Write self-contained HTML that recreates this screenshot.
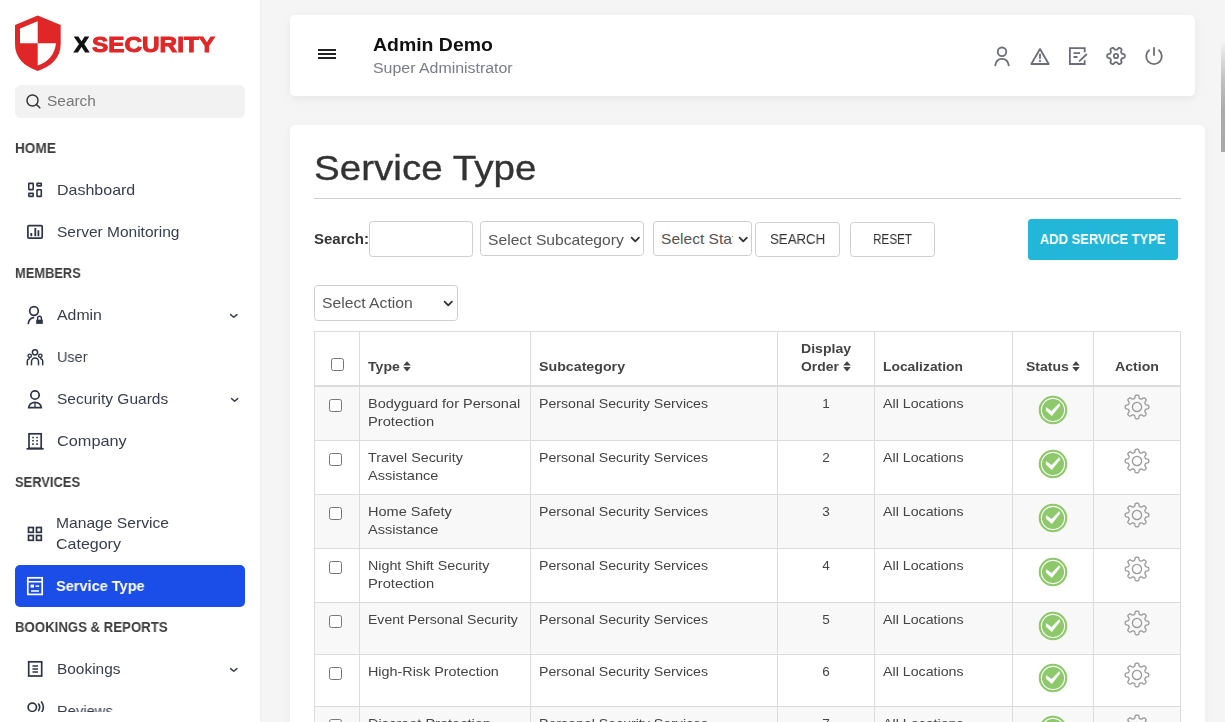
<!DOCTYPE html>
<html><head><meta charset="utf-8"><title>Service Type</title>
<style>
html,body{margin:0;padding:0;width:1225px;height:722px;overflow:hidden;background:#f5f5f5;font-family:'Liberation Sans', sans-serif}
.t{position:absolute;white-space:nowrap;line-height:1;will-change:transform}
svg{overflow:visible}
</style></head><body>
<div style="position:absolute;left:0;top:0;width:260px;height:722px;background:#fff;box-shadow:1px 0 3px rgba(0,0,0,0.04)"></div>
<svg style="position:absolute;left:13px;top:14px" width="50" height="60" viewBox="0 0 50 60">
<path d="M24.7 1.5 L47.7 11 L47.7 30 C47.7 44 38 52.5 24.7 57 C11.4 52.5 2 44 2 30 L2 11 Z" fill="#e02727"/>
<path d="M24.7 7.3 L7 14.5 L7 29.3 L24.7 29.3 Z" fill="#fff"/>
<path d="M24.7 29.3 L43 29.3 C41.5 41 35 48 24.7 51.5 Z" fill="#fff"/>
</svg>
<div style="position:absolute;left:15px;top:85px;width:230px;height:33px;background:#f2f2f2;border-radius:6px"></div>
<svg style="position:absolute;left:25px;top:93px" width="17" height="17" viewBox="0 0 17 17">
<circle cx="7.5" cy="7.5" r="5.5" fill="none" stroke="#333" stroke-width="1.45"/>
<path d="M11.5 11.5 L14.8 14.8" stroke="#333" stroke-width="1.45" stroke-linecap="round"/></svg>
<div style="position:absolute;left:15px;top:565px;width:230px;height:42px;background:#1b4de8;border-radius:5px"></div>
<div style="position:absolute;left:290px;top:15px;width:905px;height:81px;background:#fff;border-radius:5px;box-shadow:0 3px 10px rgba(0,0,0,0.06)"></div>
<div style="position:absolute;left:318px;top:49px;width:18px;height:2px;background:#222"></div>
<div style="position:absolute;left:318px;top:53px;width:18px;height:2px;background:#222"></div>
<div style="position:absolute;left:318px;top:57px;width:18px;height:2px;background:#222"></div>
<div style="position:absolute;left:290px;top:125px;width:915px;height:700px;background:#fff;border-radius:5px;box-shadow:0 3px 10px rgba(0,0,0,0.05)"></div>
<div style="position:absolute;left:314px;top:198px;width:867px;height:1px;background:#cfcfcf"></div>
<div style="position:absolute;left:369px;top:221px;width:104px;height:36px;box-sizing:border-box;background:#fff;border:1px solid #cfcfcf;border-radius:3.5px"></div>
<div style="position:absolute;left:480px;top:221px;width:164px;height:35px;box-sizing:border-box;background:#fff;border:1px solid #cfcfcf;border-radius:3.5px"></div>
<svg style="position:absolute;left:630px;top:235.5px" width="10.5" height="7" viewBox="-1 -1 10.5 7"><path d="M0.6 0.6 L4.25 4.4 L7.9 0.6" fill="none" stroke="#333" stroke-width="1.8" stroke-linecap="round" stroke-linejoin="round"/></svg>
<div style="position:absolute;left:653px;top:221px;width:99px;height:35px;box-sizing:border-box;background:#fff;border:1px solid #cfcfcf;border-radius:3.5px"></div>
<div style="position:absolute;left:654px;top:222px;width:79px;height:33px;overflow:hidden"><span style="position:absolute;left:7.3px;top:8.8025px;white-space:nowrap;font-family:&quot;Liberation Sans&quot;, sans-serif;font-size:15px;color:#555;line-height:1;transform-origin:0 0;transform:scaleX(1.037)">Select Status</span></div>
<svg style="position:absolute;left:737.7px;top:235.5px" width="10.5" height="7" viewBox="-1 -1 10.5 7"><path d="M0.6 0.6 L4.25 4.4 L7.9 0.6" fill="none" stroke="#333" stroke-width="1.8" stroke-linecap="round" stroke-linejoin="round"/></svg>
<div style="position:absolute;left:755px;top:222px;width:85px;height:35px;box-sizing:border-box;background:#fff;border:1px solid #cfcfcf;border-radius:3.5px"></div>
<div style="position:absolute;left:850px;top:222px;width:85px;height:35px;box-sizing:border-box;background:#fff;border:1px solid #cfcfcf;border-radius:3.5px"></div>
<div style="position:absolute;left:1028px;top:219px;width:150px;height:41px;background:#22b7d8;border-radius:3.5px"></div>
<div style="position:absolute;left:314px;top:285px;width:144px;height:36px;box-sizing:border-box;background:#fff;border:1px solid #cfcfcf;border-radius:3.5px"></div>
<svg style="position:absolute;left:443.2px;top:299.5px" width="10.5" height="7" viewBox="-1 -1 10.5 7"><path d="M0.6 0.6 L4.25 4.4 L7.9 0.6" fill="none" stroke="#333" stroke-width="1.8" stroke-linecap="round" stroke-linejoin="round"/></svg>
<div style="position:absolute;left:314px;top:387px;width:866px;height:54px;background:#f8f8f8"></div>
<div style="position:absolute;left:314px;top:495px;width:866px;height:54px;background:#f8f8f8"></div>
<div style="position:absolute;left:314px;top:603px;width:866px;height:52px;background:#f8f8f8"></div>
<div style="position:absolute;left:314px;top:707px;width:866px;height:54px;background:#f8f8f8"></div>
<div style="position:absolute;left:314px;top:331px;width:867px;height:1px;background:#dcdcdc"></div>
<div style="position:absolute;left:314px;top:385px;width:867px;height:2px;background:#dcdcdc"></div>
<div style="position:absolute;left:314px;top:440px;width:867px;height:1px;background:#dcdcdc"></div>
<div style="position:absolute;left:314px;top:494px;width:867px;height:1px;background:#dcdcdc"></div>
<div style="position:absolute;left:314px;top:548px;width:867px;height:1px;background:#dcdcdc"></div>
<div style="position:absolute;left:314px;top:602px;width:867px;height:1px;background:#dcdcdc"></div>
<div style="position:absolute;left:314px;top:654px;width:867px;height:1px;background:#dcdcdc"></div>
<div style="position:absolute;left:314px;top:706px;width:867px;height:1px;background:#dcdcdc"></div>
<div style="position:absolute;left:314px;top:760px;width:867px;height:1px;background:#dcdcdc"></div>
<div style="position:absolute;left:314px;top:331px;width:1px;height:400px;background:#dcdcdc"></div>
<div style="position:absolute;left:359px;top:331px;width:1px;height:400px;background:#dcdcdc"></div>
<div style="position:absolute;left:530px;top:331px;width:1px;height:400px;background:#dcdcdc"></div>
<div style="position:absolute;left:777px;top:331px;width:1px;height:400px;background:#dcdcdc"></div>
<div style="position:absolute;left:874px;top:331px;width:1px;height:400px;background:#dcdcdc"></div>
<div style="position:absolute;left:1012px;top:331px;width:1px;height:400px;background:#dcdcdc"></div>
<div style="position:absolute;left:1093px;top:331px;width:1px;height:400px;background:#dcdcdc"></div>
<div style="position:absolute;left:1180px;top:331px;width:1px;height:400px;background:#dcdcdc"></div>
<div style="position:absolute;left:331px;top:358px;width:13px;height:13px;box-sizing:border-box;border:1px solid #767676;border-radius:2.5px;background:#fff"></div>
<svg style="position:absolute;left:403.4px;top:361.0px" width="8" height="11" viewBox="0 0 8 11"><path d="M0.2 4.6 L4 0.2 L7.8 4.6 Z M0.2 6.1 L4 10.5 L7.8 6.1 Z" fill="#444"/></svg>
<svg style="position:absolute;left:842.6px;top:361.3px" width="8" height="11" viewBox="0 0 8 11"><path d="M0.2 4.6 L4 0.2 L7.8 4.6 Z M0.2 6.1 L4 10.5 L7.8 6.1 Z" fill="#444"/></svg>
<svg style="position:absolute;left:1072.3px;top:361.3px" width="8" height="11" viewBox="0 0 8 11"><path d="M0.2 4.6 L4 0.2 L7.8 4.6 Z M0.2 6.1 L4 10.5 L7.8 6.1 Z" fill="#444"/></svg>
<div style="position:absolute;left:329px;top:399px;width:13px;height:13px;box-sizing:border-box;border:1px solid #767676;border-radius:2.5px;background:#fff"></div>
<svg style="position:absolute;left:1038px;top:395px" width="30" height="30" viewBox="0 0 30 30"><circle cx="15" cy="15" r="14.3" fill="#8dc96b"/><circle cx="15" cy="15" r="11.6" fill="none" stroke="#fff" stroke-width="1.1"/><path d="M8.4 12.6 L13.6 16.2 L21.2 8.4 L22 10.6 L13.8 20.8 L8 15.4 Z" fill="#fff" stroke="#fff" stroke-width="0.4" stroke-linejoin="round"/></svg>
<svg style="position:absolute;left:1124px;top:394px" width="26" height="26" viewBox="-13 -13 26 26"><path d="M0.00 -11.80 L0.31 -11.79 L0.62 -11.77 L0.92 -11.72 L1.22 -11.62 L1.51 -11.43 L1.75 -11.07 L1.94 -10.47 L2.07 -9.74 L2.19 -9.13 L2.35 -8.76 L2.53 -8.55 L2.73 -8.41 L2.94 -8.31 L3.15 -8.22 L3.37 -8.13 L3.58 -8.04 L3.80 -7.96 L4.02 -7.88 L4.25 -7.84 L4.53 -7.85 L4.91 -8.01 L5.42 -8.35 L6.03 -8.77 L6.59 -9.07 L7.02 -9.15 L7.35 -9.08 L7.63 -8.94 L7.88 -8.76 L8.12 -8.56 L8.34 -8.34 L8.56 -8.12 L8.76 -7.88 L8.94 -7.63 L9.08 -7.35 L9.15 -7.02 L9.07 -6.59 L8.77 -6.03 L8.35 -5.42 L8.01 -4.91 L7.85 -4.53 L7.84 -4.25 L7.88 -4.02 L7.96 -3.80 L8.04 -3.58 L8.13 -3.37 L8.22 -3.15 L8.31 -2.94 L8.41 -2.73 L8.55 -2.53 L8.76 -2.35 L9.13 -2.19 L9.74 -2.07 L10.47 -1.94 L11.07 -1.75 L11.43 -1.51 L11.62 -1.22 L11.72 -0.92 L11.77 -0.62 L11.79 -0.31 L11.80 -0.00 L11.79 0.31 L11.77 0.62 L11.72 0.92 L11.62 1.22 L11.43 1.51 L11.07 1.75 L10.47 1.94 L9.74 2.07 L9.13 2.19 L8.76 2.35 L8.55 2.53 L8.41 2.73 L8.31 2.94 L8.22 3.15 L8.13 3.37 L8.04 3.58 L7.96 3.80 L7.88 4.02 L7.84 4.25 L7.85 4.53 L8.01 4.91 L8.35 5.42 L8.77 6.03 L9.07 6.59 L9.15 7.02 L9.08 7.35 L8.94 7.63 L8.76 7.88 L8.56 8.12 L8.34 8.34 L8.12 8.56 L7.88 8.76 L7.63 8.94 L7.35 9.08 L7.02 9.15 L6.59 9.07 L6.03 8.77 L5.42 8.35 L4.91 8.01 L4.53 7.85 L4.25 7.84 L4.02 7.88 L3.80 7.96 L3.58 8.04 L3.37 8.13 L3.15 8.22 L2.94 8.31 L2.73 8.41 L2.53 8.55 L2.35 8.76 L2.19 9.13 L2.07 9.74 L1.94 10.47 L1.75 11.07 L1.51 11.43 L1.22 11.62 L0.92 11.72 L0.62 11.77 L0.31 11.79 L0.00 11.80 L-0.31 11.79 L-0.62 11.77 L-0.92 11.72 L-1.22 11.62 L-1.51 11.43 L-1.75 11.07 L-1.94 10.47 L-2.07 9.74 L-2.19 9.13 L-2.35 8.76 L-2.53 8.55 L-2.73 8.41 L-2.94 8.31 L-3.15 8.22 L-3.37 8.13 L-3.58 8.04 L-3.80 7.96 L-4.02 7.88 L-4.25 7.84 L-4.53 7.85 L-4.91 8.01 L-5.42 8.35 L-6.03 8.77 L-6.59 9.07 L-7.02 9.15 L-7.35 9.08 L-7.63 8.94 L-7.88 8.76 L-8.12 8.56 L-8.34 8.34 L-8.56 8.12 L-8.76 7.88 L-8.94 7.63 L-9.08 7.35 L-9.15 7.02 L-9.07 6.59 L-8.77 6.03 L-8.35 5.42 L-8.01 4.91 L-7.85 4.53 L-7.84 4.25 L-7.88 4.02 L-7.96 3.80 L-8.04 3.58 L-8.13 3.37 L-8.22 3.15 L-8.31 2.94 L-8.41 2.73 L-8.55 2.53 L-8.76 2.35 L-9.13 2.19 L-9.74 2.07 L-10.47 1.94 L-11.07 1.75 L-11.43 1.51 L-11.62 1.22 L-11.72 0.92 L-11.77 0.62 L-11.79 0.31 L-11.80 0.00 L-11.79 -0.31 L-11.77 -0.62 L-11.72 -0.92 L-11.62 -1.22 L-11.43 -1.51 L-11.07 -1.75 L-10.47 -1.94 L-9.74 -2.07 L-9.13 -2.19 L-8.76 -2.35 L-8.55 -2.53 L-8.41 -2.73 L-8.31 -2.94 L-8.22 -3.15 L-8.13 -3.37 L-8.04 -3.58 L-7.96 -3.80 L-7.88 -4.02 L-7.84 -4.25 L-7.85 -4.53 L-8.01 -4.91 L-8.35 -5.42 L-8.77 -6.03 L-9.07 -6.59 L-9.15 -7.02 L-9.08 -7.35 L-8.94 -7.63 L-8.76 -7.88 L-8.56 -8.12 L-8.34 -8.34 L-8.12 -8.56 L-7.88 -8.76 L-7.63 -8.94 L-7.35 -9.08 L-7.02 -9.15 L-6.59 -9.07 L-6.03 -8.77 L-5.42 -8.35 L-4.91 -8.01 L-4.53 -7.85 L-4.25 -7.84 L-4.02 -7.88 L-3.80 -7.96 L-3.58 -8.04 L-3.37 -8.13 L-3.15 -8.22 L-2.94 -8.31 L-2.73 -8.41 L-2.53 -8.55 L-2.35 -8.76 L-2.19 -9.13 L-2.07 -9.74 L-1.94 -10.47 L-1.75 -11.07 L-1.51 -11.43 L-1.22 -11.62 L-0.92 -11.72 L-0.62 -11.77 L-0.31 -11.79 Z" fill="none" stroke="#999" stroke-width="1.3" stroke-linejoin="round"/><circle cx="0" cy="0" r="4.6" fill="none" stroke="#999" stroke-width="1.3"/></svg>
<div style="position:absolute;left:329px;top:453px;width:13px;height:13px;box-sizing:border-box;border:1px solid #767676;border-radius:2.5px;background:#fff"></div>
<svg style="position:absolute;left:1038px;top:449px" width="30" height="30" viewBox="0 0 30 30"><circle cx="15" cy="15" r="14.3" fill="#8dc96b"/><circle cx="15" cy="15" r="11.6" fill="none" stroke="#fff" stroke-width="1.1"/><path d="M8.4 12.6 L13.6 16.2 L21.2 8.4 L22 10.6 L13.8 20.8 L8 15.4 Z" fill="#fff" stroke="#fff" stroke-width="0.4" stroke-linejoin="round"/></svg>
<svg style="position:absolute;left:1124px;top:448px" width="26" height="26" viewBox="-13 -13 26 26"><path d="M0.00 -11.80 L0.31 -11.79 L0.62 -11.77 L0.92 -11.72 L1.22 -11.62 L1.51 -11.43 L1.75 -11.07 L1.94 -10.47 L2.07 -9.74 L2.19 -9.13 L2.35 -8.76 L2.53 -8.55 L2.73 -8.41 L2.94 -8.31 L3.15 -8.22 L3.37 -8.13 L3.58 -8.04 L3.80 -7.96 L4.02 -7.88 L4.25 -7.84 L4.53 -7.85 L4.91 -8.01 L5.42 -8.35 L6.03 -8.77 L6.59 -9.07 L7.02 -9.15 L7.35 -9.08 L7.63 -8.94 L7.88 -8.76 L8.12 -8.56 L8.34 -8.34 L8.56 -8.12 L8.76 -7.88 L8.94 -7.63 L9.08 -7.35 L9.15 -7.02 L9.07 -6.59 L8.77 -6.03 L8.35 -5.42 L8.01 -4.91 L7.85 -4.53 L7.84 -4.25 L7.88 -4.02 L7.96 -3.80 L8.04 -3.58 L8.13 -3.37 L8.22 -3.15 L8.31 -2.94 L8.41 -2.73 L8.55 -2.53 L8.76 -2.35 L9.13 -2.19 L9.74 -2.07 L10.47 -1.94 L11.07 -1.75 L11.43 -1.51 L11.62 -1.22 L11.72 -0.92 L11.77 -0.62 L11.79 -0.31 L11.80 -0.00 L11.79 0.31 L11.77 0.62 L11.72 0.92 L11.62 1.22 L11.43 1.51 L11.07 1.75 L10.47 1.94 L9.74 2.07 L9.13 2.19 L8.76 2.35 L8.55 2.53 L8.41 2.73 L8.31 2.94 L8.22 3.15 L8.13 3.37 L8.04 3.58 L7.96 3.80 L7.88 4.02 L7.84 4.25 L7.85 4.53 L8.01 4.91 L8.35 5.42 L8.77 6.03 L9.07 6.59 L9.15 7.02 L9.08 7.35 L8.94 7.63 L8.76 7.88 L8.56 8.12 L8.34 8.34 L8.12 8.56 L7.88 8.76 L7.63 8.94 L7.35 9.08 L7.02 9.15 L6.59 9.07 L6.03 8.77 L5.42 8.35 L4.91 8.01 L4.53 7.85 L4.25 7.84 L4.02 7.88 L3.80 7.96 L3.58 8.04 L3.37 8.13 L3.15 8.22 L2.94 8.31 L2.73 8.41 L2.53 8.55 L2.35 8.76 L2.19 9.13 L2.07 9.74 L1.94 10.47 L1.75 11.07 L1.51 11.43 L1.22 11.62 L0.92 11.72 L0.62 11.77 L0.31 11.79 L0.00 11.80 L-0.31 11.79 L-0.62 11.77 L-0.92 11.72 L-1.22 11.62 L-1.51 11.43 L-1.75 11.07 L-1.94 10.47 L-2.07 9.74 L-2.19 9.13 L-2.35 8.76 L-2.53 8.55 L-2.73 8.41 L-2.94 8.31 L-3.15 8.22 L-3.37 8.13 L-3.58 8.04 L-3.80 7.96 L-4.02 7.88 L-4.25 7.84 L-4.53 7.85 L-4.91 8.01 L-5.42 8.35 L-6.03 8.77 L-6.59 9.07 L-7.02 9.15 L-7.35 9.08 L-7.63 8.94 L-7.88 8.76 L-8.12 8.56 L-8.34 8.34 L-8.56 8.12 L-8.76 7.88 L-8.94 7.63 L-9.08 7.35 L-9.15 7.02 L-9.07 6.59 L-8.77 6.03 L-8.35 5.42 L-8.01 4.91 L-7.85 4.53 L-7.84 4.25 L-7.88 4.02 L-7.96 3.80 L-8.04 3.58 L-8.13 3.37 L-8.22 3.15 L-8.31 2.94 L-8.41 2.73 L-8.55 2.53 L-8.76 2.35 L-9.13 2.19 L-9.74 2.07 L-10.47 1.94 L-11.07 1.75 L-11.43 1.51 L-11.62 1.22 L-11.72 0.92 L-11.77 0.62 L-11.79 0.31 L-11.80 0.00 L-11.79 -0.31 L-11.77 -0.62 L-11.72 -0.92 L-11.62 -1.22 L-11.43 -1.51 L-11.07 -1.75 L-10.47 -1.94 L-9.74 -2.07 L-9.13 -2.19 L-8.76 -2.35 L-8.55 -2.53 L-8.41 -2.73 L-8.31 -2.94 L-8.22 -3.15 L-8.13 -3.37 L-8.04 -3.58 L-7.96 -3.80 L-7.88 -4.02 L-7.84 -4.25 L-7.85 -4.53 L-8.01 -4.91 L-8.35 -5.42 L-8.77 -6.03 L-9.07 -6.59 L-9.15 -7.02 L-9.08 -7.35 L-8.94 -7.63 L-8.76 -7.88 L-8.56 -8.12 L-8.34 -8.34 L-8.12 -8.56 L-7.88 -8.76 L-7.63 -8.94 L-7.35 -9.08 L-7.02 -9.15 L-6.59 -9.07 L-6.03 -8.77 L-5.42 -8.35 L-4.91 -8.01 L-4.53 -7.85 L-4.25 -7.84 L-4.02 -7.88 L-3.80 -7.96 L-3.58 -8.04 L-3.37 -8.13 L-3.15 -8.22 L-2.94 -8.31 L-2.73 -8.41 L-2.53 -8.55 L-2.35 -8.76 L-2.19 -9.13 L-2.07 -9.74 L-1.94 -10.47 L-1.75 -11.07 L-1.51 -11.43 L-1.22 -11.62 L-0.92 -11.72 L-0.62 -11.77 L-0.31 -11.79 Z" fill="none" stroke="#999" stroke-width="1.3" stroke-linejoin="round"/><circle cx="0" cy="0" r="4.6" fill="none" stroke="#999" stroke-width="1.3"/></svg>
<div style="position:absolute;left:329px;top:507px;width:13px;height:13px;box-sizing:border-box;border:1px solid #767676;border-radius:2.5px;background:#fff"></div>
<svg style="position:absolute;left:1038px;top:503px" width="30" height="30" viewBox="0 0 30 30"><circle cx="15" cy="15" r="14.3" fill="#8dc96b"/><circle cx="15" cy="15" r="11.6" fill="none" stroke="#fff" stroke-width="1.1"/><path d="M8.4 12.6 L13.6 16.2 L21.2 8.4 L22 10.6 L13.8 20.8 L8 15.4 Z" fill="#fff" stroke="#fff" stroke-width="0.4" stroke-linejoin="round"/></svg>
<svg style="position:absolute;left:1124px;top:502px" width="26" height="26" viewBox="-13 -13 26 26"><path d="M0.00 -11.80 L0.31 -11.79 L0.62 -11.77 L0.92 -11.72 L1.22 -11.62 L1.51 -11.43 L1.75 -11.07 L1.94 -10.47 L2.07 -9.74 L2.19 -9.13 L2.35 -8.76 L2.53 -8.55 L2.73 -8.41 L2.94 -8.31 L3.15 -8.22 L3.37 -8.13 L3.58 -8.04 L3.80 -7.96 L4.02 -7.88 L4.25 -7.84 L4.53 -7.85 L4.91 -8.01 L5.42 -8.35 L6.03 -8.77 L6.59 -9.07 L7.02 -9.15 L7.35 -9.08 L7.63 -8.94 L7.88 -8.76 L8.12 -8.56 L8.34 -8.34 L8.56 -8.12 L8.76 -7.88 L8.94 -7.63 L9.08 -7.35 L9.15 -7.02 L9.07 -6.59 L8.77 -6.03 L8.35 -5.42 L8.01 -4.91 L7.85 -4.53 L7.84 -4.25 L7.88 -4.02 L7.96 -3.80 L8.04 -3.58 L8.13 -3.37 L8.22 -3.15 L8.31 -2.94 L8.41 -2.73 L8.55 -2.53 L8.76 -2.35 L9.13 -2.19 L9.74 -2.07 L10.47 -1.94 L11.07 -1.75 L11.43 -1.51 L11.62 -1.22 L11.72 -0.92 L11.77 -0.62 L11.79 -0.31 L11.80 -0.00 L11.79 0.31 L11.77 0.62 L11.72 0.92 L11.62 1.22 L11.43 1.51 L11.07 1.75 L10.47 1.94 L9.74 2.07 L9.13 2.19 L8.76 2.35 L8.55 2.53 L8.41 2.73 L8.31 2.94 L8.22 3.15 L8.13 3.37 L8.04 3.58 L7.96 3.80 L7.88 4.02 L7.84 4.25 L7.85 4.53 L8.01 4.91 L8.35 5.42 L8.77 6.03 L9.07 6.59 L9.15 7.02 L9.08 7.35 L8.94 7.63 L8.76 7.88 L8.56 8.12 L8.34 8.34 L8.12 8.56 L7.88 8.76 L7.63 8.94 L7.35 9.08 L7.02 9.15 L6.59 9.07 L6.03 8.77 L5.42 8.35 L4.91 8.01 L4.53 7.85 L4.25 7.84 L4.02 7.88 L3.80 7.96 L3.58 8.04 L3.37 8.13 L3.15 8.22 L2.94 8.31 L2.73 8.41 L2.53 8.55 L2.35 8.76 L2.19 9.13 L2.07 9.74 L1.94 10.47 L1.75 11.07 L1.51 11.43 L1.22 11.62 L0.92 11.72 L0.62 11.77 L0.31 11.79 L0.00 11.80 L-0.31 11.79 L-0.62 11.77 L-0.92 11.72 L-1.22 11.62 L-1.51 11.43 L-1.75 11.07 L-1.94 10.47 L-2.07 9.74 L-2.19 9.13 L-2.35 8.76 L-2.53 8.55 L-2.73 8.41 L-2.94 8.31 L-3.15 8.22 L-3.37 8.13 L-3.58 8.04 L-3.80 7.96 L-4.02 7.88 L-4.25 7.84 L-4.53 7.85 L-4.91 8.01 L-5.42 8.35 L-6.03 8.77 L-6.59 9.07 L-7.02 9.15 L-7.35 9.08 L-7.63 8.94 L-7.88 8.76 L-8.12 8.56 L-8.34 8.34 L-8.56 8.12 L-8.76 7.88 L-8.94 7.63 L-9.08 7.35 L-9.15 7.02 L-9.07 6.59 L-8.77 6.03 L-8.35 5.42 L-8.01 4.91 L-7.85 4.53 L-7.84 4.25 L-7.88 4.02 L-7.96 3.80 L-8.04 3.58 L-8.13 3.37 L-8.22 3.15 L-8.31 2.94 L-8.41 2.73 L-8.55 2.53 L-8.76 2.35 L-9.13 2.19 L-9.74 2.07 L-10.47 1.94 L-11.07 1.75 L-11.43 1.51 L-11.62 1.22 L-11.72 0.92 L-11.77 0.62 L-11.79 0.31 L-11.80 0.00 L-11.79 -0.31 L-11.77 -0.62 L-11.72 -0.92 L-11.62 -1.22 L-11.43 -1.51 L-11.07 -1.75 L-10.47 -1.94 L-9.74 -2.07 L-9.13 -2.19 L-8.76 -2.35 L-8.55 -2.53 L-8.41 -2.73 L-8.31 -2.94 L-8.22 -3.15 L-8.13 -3.37 L-8.04 -3.58 L-7.96 -3.80 L-7.88 -4.02 L-7.84 -4.25 L-7.85 -4.53 L-8.01 -4.91 L-8.35 -5.42 L-8.77 -6.03 L-9.07 -6.59 L-9.15 -7.02 L-9.08 -7.35 L-8.94 -7.63 L-8.76 -7.88 L-8.56 -8.12 L-8.34 -8.34 L-8.12 -8.56 L-7.88 -8.76 L-7.63 -8.94 L-7.35 -9.08 L-7.02 -9.15 L-6.59 -9.07 L-6.03 -8.77 L-5.42 -8.35 L-4.91 -8.01 L-4.53 -7.85 L-4.25 -7.84 L-4.02 -7.88 L-3.80 -7.96 L-3.58 -8.04 L-3.37 -8.13 L-3.15 -8.22 L-2.94 -8.31 L-2.73 -8.41 L-2.53 -8.55 L-2.35 -8.76 L-2.19 -9.13 L-2.07 -9.74 L-1.94 -10.47 L-1.75 -11.07 L-1.51 -11.43 L-1.22 -11.62 L-0.92 -11.72 L-0.62 -11.77 L-0.31 -11.79 Z" fill="none" stroke="#999" stroke-width="1.3" stroke-linejoin="round"/><circle cx="0" cy="0" r="4.6" fill="none" stroke="#999" stroke-width="1.3"/></svg>
<div style="position:absolute;left:329px;top:561px;width:13px;height:13px;box-sizing:border-box;border:1px solid #767676;border-radius:2.5px;background:#fff"></div>
<svg style="position:absolute;left:1038px;top:557px" width="30" height="30" viewBox="0 0 30 30"><circle cx="15" cy="15" r="14.3" fill="#8dc96b"/><circle cx="15" cy="15" r="11.6" fill="none" stroke="#fff" stroke-width="1.1"/><path d="M8.4 12.6 L13.6 16.2 L21.2 8.4 L22 10.6 L13.8 20.8 L8 15.4 Z" fill="#fff" stroke="#fff" stroke-width="0.4" stroke-linejoin="round"/></svg>
<svg style="position:absolute;left:1124px;top:556px" width="26" height="26" viewBox="-13 -13 26 26"><path d="M0.00 -11.80 L0.31 -11.79 L0.62 -11.77 L0.92 -11.72 L1.22 -11.62 L1.51 -11.43 L1.75 -11.07 L1.94 -10.47 L2.07 -9.74 L2.19 -9.13 L2.35 -8.76 L2.53 -8.55 L2.73 -8.41 L2.94 -8.31 L3.15 -8.22 L3.37 -8.13 L3.58 -8.04 L3.80 -7.96 L4.02 -7.88 L4.25 -7.84 L4.53 -7.85 L4.91 -8.01 L5.42 -8.35 L6.03 -8.77 L6.59 -9.07 L7.02 -9.15 L7.35 -9.08 L7.63 -8.94 L7.88 -8.76 L8.12 -8.56 L8.34 -8.34 L8.56 -8.12 L8.76 -7.88 L8.94 -7.63 L9.08 -7.35 L9.15 -7.02 L9.07 -6.59 L8.77 -6.03 L8.35 -5.42 L8.01 -4.91 L7.85 -4.53 L7.84 -4.25 L7.88 -4.02 L7.96 -3.80 L8.04 -3.58 L8.13 -3.37 L8.22 -3.15 L8.31 -2.94 L8.41 -2.73 L8.55 -2.53 L8.76 -2.35 L9.13 -2.19 L9.74 -2.07 L10.47 -1.94 L11.07 -1.75 L11.43 -1.51 L11.62 -1.22 L11.72 -0.92 L11.77 -0.62 L11.79 -0.31 L11.80 -0.00 L11.79 0.31 L11.77 0.62 L11.72 0.92 L11.62 1.22 L11.43 1.51 L11.07 1.75 L10.47 1.94 L9.74 2.07 L9.13 2.19 L8.76 2.35 L8.55 2.53 L8.41 2.73 L8.31 2.94 L8.22 3.15 L8.13 3.37 L8.04 3.58 L7.96 3.80 L7.88 4.02 L7.84 4.25 L7.85 4.53 L8.01 4.91 L8.35 5.42 L8.77 6.03 L9.07 6.59 L9.15 7.02 L9.08 7.35 L8.94 7.63 L8.76 7.88 L8.56 8.12 L8.34 8.34 L8.12 8.56 L7.88 8.76 L7.63 8.94 L7.35 9.08 L7.02 9.15 L6.59 9.07 L6.03 8.77 L5.42 8.35 L4.91 8.01 L4.53 7.85 L4.25 7.84 L4.02 7.88 L3.80 7.96 L3.58 8.04 L3.37 8.13 L3.15 8.22 L2.94 8.31 L2.73 8.41 L2.53 8.55 L2.35 8.76 L2.19 9.13 L2.07 9.74 L1.94 10.47 L1.75 11.07 L1.51 11.43 L1.22 11.62 L0.92 11.72 L0.62 11.77 L0.31 11.79 L0.00 11.80 L-0.31 11.79 L-0.62 11.77 L-0.92 11.72 L-1.22 11.62 L-1.51 11.43 L-1.75 11.07 L-1.94 10.47 L-2.07 9.74 L-2.19 9.13 L-2.35 8.76 L-2.53 8.55 L-2.73 8.41 L-2.94 8.31 L-3.15 8.22 L-3.37 8.13 L-3.58 8.04 L-3.80 7.96 L-4.02 7.88 L-4.25 7.84 L-4.53 7.85 L-4.91 8.01 L-5.42 8.35 L-6.03 8.77 L-6.59 9.07 L-7.02 9.15 L-7.35 9.08 L-7.63 8.94 L-7.88 8.76 L-8.12 8.56 L-8.34 8.34 L-8.56 8.12 L-8.76 7.88 L-8.94 7.63 L-9.08 7.35 L-9.15 7.02 L-9.07 6.59 L-8.77 6.03 L-8.35 5.42 L-8.01 4.91 L-7.85 4.53 L-7.84 4.25 L-7.88 4.02 L-7.96 3.80 L-8.04 3.58 L-8.13 3.37 L-8.22 3.15 L-8.31 2.94 L-8.41 2.73 L-8.55 2.53 L-8.76 2.35 L-9.13 2.19 L-9.74 2.07 L-10.47 1.94 L-11.07 1.75 L-11.43 1.51 L-11.62 1.22 L-11.72 0.92 L-11.77 0.62 L-11.79 0.31 L-11.80 0.00 L-11.79 -0.31 L-11.77 -0.62 L-11.72 -0.92 L-11.62 -1.22 L-11.43 -1.51 L-11.07 -1.75 L-10.47 -1.94 L-9.74 -2.07 L-9.13 -2.19 L-8.76 -2.35 L-8.55 -2.53 L-8.41 -2.73 L-8.31 -2.94 L-8.22 -3.15 L-8.13 -3.37 L-8.04 -3.58 L-7.96 -3.80 L-7.88 -4.02 L-7.84 -4.25 L-7.85 -4.53 L-8.01 -4.91 L-8.35 -5.42 L-8.77 -6.03 L-9.07 -6.59 L-9.15 -7.02 L-9.08 -7.35 L-8.94 -7.63 L-8.76 -7.88 L-8.56 -8.12 L-8.34 -8.34 L-8.12 -8.56 L-7.88 -8.76 L-7.63 -8.94 L-7.35 -9.08 L-7.02 -9.15 L-6.59 -9.07 L-6.03 -8.77 L-5.42 -8.35 L-4.91 -8.01 L-4.53 -7.85 L-4.25 -7.84 L-4.02 -7.88 L-3.80 -7.96 L-3.58 -8.04 L-3.37 -8.13 L-3.15 -8.22 L-2.94 -8.31 L-2.73 -8.41 L-2.53 -8.55 L-2.35 -8.76 L-2.19 -9.13 L-2.07 -9.74 L-1.94 -10.47 L-1.75 -11.07 L-1.51 -11.43 L-1.22 -11.62 L-0.92 -11.72 L-0.62 -11.77 L-0.31 -11.79 Z" fill="none" stroke="#999" stroke-width="1.3" stroke-linejoin="round"/><circle cx="0" cy="0" r="4.6" fill="none" stroke="#999" stroke-width="1.3"/></svg>
<div style="position:absolute;left:329px;top:615px;width:13px;height:13px;box-sizing:border-box;border:1px solid #767676;border-radius:2.5px;background:#fff"></div>
<svg style="position:absolute;left:1038px;top:611px" width="30" height="30" viewBox="0 0 30 30"><circle cx="15" cy="15" r="14.3" fill="#8dc96b"/><circle cx="15" cy="15" r="11.6" fill="none" stroke="#fff" stroke-width="1.1"/><path d="M8.4 12.6 L13.6 16.2 L21.2 8.4 L22 10.6 L13.8 20.8 L8 15.4 Z" fill="#fff" stroke="#fff" stroke-width="0.4" stroke-linejoin="round"/></svg>
<svg style="position:absolute;left:1124px;top:610px" width="26" height="26" viewBox="-13 -13 26 26"><path d="M0.00 -11.80 L0.31 -11.79 L0.62 -11.77 L0.92 -11.72 L1.22 -11.62 L1.51 -11.43 L1.75 -11.07 L1.94 -10.47 L2.07 -9.74 L2.19 -9.13 L2.35 -8.76 L2.53 -8.55 L2.73 -8.41 L2.94 -8.31 L3.15 -8.22 L3.37 -8.13 L3.58 -8.04 L3.80 -7.96 L4.02 -7.88 L4.25 -7.84 L4.53 -7.85 L4.91 -8.01 L5.42 -8.35 L6.03 -8.77 L6.59 -9.07 L7.02 -9.15 L7.35 -9.08 L7.63 -8.94 L7.88 -8.76 L8.12 -8.56 L8.34 -8.34 L8.56 -8.12 L8.76 -7.88 L8.94 -7.63 L9.08 -7.35 L9.15 -7.02 L9.07 -6.59 L8.77 -6.03 L8.35 -5.42 L8.01 -4.91 L7.85 -4.53 L7.84 -4.25 L7.88 -4.02 L7.96 -3.80 L8.04 -3.58 L8.13 -3.37 L8.22 -3.15 L8.31 -2.94 L8.41 -2.73 L8.55 -2.53 L8.76 -2.35 L9.13 -2.19 L9.74 -2.07 L10.47 -1.94 L11.07 -1.75 L11.43 -1.51 L11.62 -1.22 L11.72 -0.92 L11.77 -0.62 L11.79 -0.31 L11.80 -0.00 L11.79 0.31 L11.77 0.62 L11.72 0.92 L11.62 1.22 L11.43 1.51 L11.07 1.75 L10.47 1.94 L9.74 2.07 L9.13 2.19 L8.76 2.35 L8.55 2.53 L8.41 2.73 L8.31 2.94 L8.22 3.15 L8.13 3.37 L8.04 3.58 L7.96 3.80 L7.88 4.02 L7.84 4.25 L7.85 4.53 L8.01 4.91 L8.35 5.42 L8.77 6.03 L9.07 6.59 L9.15 7.02 L9.08 7.35 L8.94 7.63 L8.76 7.88 L8.56 8.12 L8.34 8.34 L8.12 8.56 L7.88 8.76 L7.63 8.94 L7.35 9.08 L7.02 9.15 L6.59 9.07 L6.03 8.77 L5.42 8.35 L4.91 8.01 L4.53 7.85 L4.25 7.84 L4.02 7.88 L3.80 7.96 L3.58 8.04 L3.37 8.13 L3.15 8.22 L2.94 8.31 L2.73 8.41 L2.53 8.55 L2.35 8.76 L2.19 9.13 L2.07 9.74 L1.94 10.47 L1.75 11.07 L1.51 11.43 L1.22 11.62 L0.92 11.72 L0.62 11.77 L0.31 11.79 L0.00 11.80 L-0.31 11.79 L-0.62 11.77 L-0.92 11.72 L-1.22 11.62 L-1.51 11.43 L-1.75 11.07 L-1.94 10.47 L-2.07 9.74 L-2.19 9.13 L-2.35 8.76 L-2.53 8.55 L-2.73 8.41 L-2.94 8.31 L-3.15 8.22 L-3.37 8.13 L-3.58 8.04 L-3.80 7.96 L-4.02 7.88 L-4.25 7.84 L-4.53 7.85 L-4.91 8.01 L-5.42 8.35 L-6.03 8.77 L-6.59 9.07 L-7.02 9.15 L-7.35 9.08 L-7.63 8.94 L-7.88 8.76 L-8.12 8.56 L-8.34 8.34 L-8.56 8.12 L-8.76 7.88 L-8.94 7.63 L-9.08 7.35 L-9.15 7.02 L-9.07 6.59 L-8.77 6.03 L-8.35 5.42 L-8.01 4.91 L-7.85 4.53 L-7.84 4.25 L-7.88 4.02 L-7.96 3.80 L-8.04 3.58 L-8.13 3.37 L-8.22 3.15 L-8.31 2.94 L-8.41 2.73 L-8.55 2.53 L-8.76 2.35 L-9.13 2.19 L-9.74 2.07 L-10.47 1.94 L-11.07 1.75 L-11.43 1.51 L-11.62 1.22 L-11.72 0.92 L-11.77 0.62 L-11.79 0.31 L-11.80 0.00 L-11.79 -0.31 L-11.77 -0.62 L-11.72 -0.92 L-11.62 -1.22 L-11.43 -1.51 L-11.07 -1.75 L-10.47 -1.94 L-9.74 -2.07 L-9.13 -2.19 L-8.76 -2.35 L-8.55 -2.53 L-8.41 -2.73 L-8.31 -2.94 L-8.22 -3.15 L-8.13 -3.37 L-8.04 -3.58 L-7.96 -3.80 L-7.88 -4.02 L-7.84 -4.25 L-7.85 -4.53 L-8.01 -4.91 L-8.35 -5.42 L-8.77 -6.03 L-9.07 -6.59 L-9.15 -7.02 L-9.08 -7.35 L-8.94 -7.63 L-8.76 -7.88 L-8.56 -8.12 L-8.34 -8.34 L-8.12 -8.56 L-7.88 -8.76 L-7.63 -8.94 L-7.35 -9.08 L-7.02 -9.15 L-6.59 -9.07 L-6.03 -8.77 L-5.42 -8.35 L-4.91 -8.01 L-4.53 -7.85 L-4.25 -7.84 L-4.02 -7.88 L-3.80 -7.96 L-3.58 -8.04 L-3.37 -8.13 L-3.15 -8.22 L-2.94 -8.31 L-2.73 -8.41 L-2.53 -8.55 L-2.35 -8.76 L-2.19 -9.13 L-2.07 -9.74 L-1.94 -10.47 L-1.75 -11.07 L-1.51 -11.43 L-1.22 -11.62 L-0.92 -11.72 L-0.62 -11.77 L-0.31 -11.79 Z" fill="none" stroke="#999" stroke-width="1.3" stroke-linejoin="round"/><circle cx="0" cy="0" r="4.6" fill="none" stroke="#999" stroke-width="1.3"/></svg>
<div style="position:absolute;left:329px;top:667px;width:13px;height:13px;box-sizing:border-box;border:1px solid #767676;border-radius:2.5px;background:#fff"></div>
<svg style="position:absolute;left:1038px;top:663px" width="30" height="30" viewBox="0 0 30 30"><circle cx="15" cy="15" r="14.3" fill="#8dc96b"/><circle cx="15" cy="15" r="11.6" fill="none" stroke="#fff" stroke-width="1.1"/><path d="M8.4 12.6 L13.6 16.2 L21.2 8.4 L22 10.6 L13.8 20.8 L8 15.4 Z" fill="#fff" stroke="#fff" stroke-width="0.4" stroke-linejoin="round"/></svg>
<svg style="position:absolute;left:1124px;top:662px" width="26" height="26" viewBox="-13 -13 26 26"><path d="M0.00 -11.80 L0.31 -11.79 L0.62 -11.77 L0.92 -11.72 L1.22 -11.62 L1.51 -11.43 L1.75 -11.07 L1.94 -10.47 L2.07 -9.74 L2.19 -9.13 L2.35 -8.76 L2.53 -8.55 L2.73 -8.41 L2.94 -8.31 L3.15 -8.22 L3.37 -8.13 L3.58 -8.04 L3.80 -7.96 L4.02 -7.88 L4.25 -7.84 L4.53 -7.85 L4.91 -8.01 L5.42 -8.35 L6.03 -8.77 L6.59 -9.07 L7.02 -9.15 L7.35 -9.08 L7.63 -8.94 L7.88 -8.76 L8.12 -8.56 L8.34 -8.34 L8.56 -8.12 L8.76 -7.88 L8.94 -7.63 L9.08 -7.35 L9.15 -7.02 L9.07 -6.59 L8.77 -6.03 L8.35 -5.42 L8.01 -4.91 L7.85 -4.53 L7.84 -4.25 L7.88 -4.02 L7.96 -3.80 L8.04 -3.58 L8.13 -3.37 L8.22 -3.15 L8.31 -2.94 L8.41 -2.73 L8.55 -2.53 L8.76 -2.35 L9.13 -2.19 L9.74 -2.07 L10.47 -1.94 L11.07 -1.75 L11.43 -1.51 L11.62 -1.22 L11.72 -0.92 L11.77 -0.62 L11.79 -0.31 L11.80 -0.00 L11.79 0.31 L11.77 0.62 L11.72 0.92 L11.62 1.22 L11.43 1.51 L11.07 1.75 L10.47 1.94 L9.74 2.07 L9.13 2.19 L8.76 2.35 L8.55 2.53 L8.41 2.73 L8.31 2.94 L8.22 3.15 L8.13 3.37 L8.04 3.58 L7.96 3.80 L7.88 4.02 L7.84 4.25 L7.85 4.53 L8.01 4.91 L8.35 5.42 L8.77 6.03 L9.07 6.59 L9.15 7.02 L9.08 7.35 L8.94 7.63 L8.76 7.88 L8.56 8.12 L8.34 8.34 L8.12 8.56 L7.88 8.76 L7.63 8.94 L7.35 9.08 L7.02 9.15 L6.59 9.07 L6.03 8.77 L5.42 8.35 L4.91 8.01 L4.53 7.85 L4.25 7.84 L4.02 7.88 L3.80 7.96 L3.58 8.04 L3.37 8.13 L3.15 8.22 L2.94 8.31 L2.73 8.41 L2.53 8.55 L2.35 8.76 L2.19 9.13 L2.07 9.74 L1.94 10.47 L1.75 11.07 L1.51 11.43 L1.22 11.62 L0.92 11.72 L0.62 11.77 L0.31 11.79 L0.00 11.80 L-0.31 11.79 L-0.62 11.77 L-0.92 11.72 L-1.22 11.62 L-1.51 11.43 L-1.75 11.07 L-1.94 10.47 L-2.07 9.74 L-2.19 9.13 L-2.35 8.76 L-2.53 8.55 L-2.73 8.41 L-2.94 8.31 L-3.15 8.22 L-3.37 8.13 L-3.58 8.04 L-3.80 7.96 L-4.02 7.88 L-4.25 7.84 L-4.53 7.85 L-4.91 8.01 L-5.42 8.35 L-6.03 8.77 L-6.59 9.07 L-7.02 9.15 L-7.35 9.08 L-7.63 8.94 L-7.88 8.76 L-8.12 8.56 L-8.34 8.34 L-8.56 8.12 L-8.76 7.88 L-8.94 7.63 L-9.08 7.35 L-9.15 7.02 L-9.07 6.59 L-8.77 6.03 L-8.35 5.42 L-8.01 4.91 L-7.85 4.53 L-7.84 4.25 L-7.88 4.02 L-7.96 3.80 L-8.04 3.58 L-8.13 3.37 L-8.22 3.15 L-8.31 2.94 L-8.41 2.73 L-8.55 2.53 L-8.76 2.35 L-9.13 2.19 L-9.74 2.07 L-10.47 1.94 L-11.07 1.75 L-11.43 1.51 L-11.62 1.22 L-11.72 0.92 L-11.77 0.62 L-11.79 0.31 L-11.80 0.00 L-11.79 -0.31 L-11.77 -0.62 L-11.72 -0.92 L-11.62 -1.22 L-11.43 -1.51 L-11.07 -1.75 L-10.47 -1.94 L-9.74 -2.07 L-9.13 -2.19 L-8.76 -2.35 L-8.55 -2.53 L-8.41 -2.73 L-8.31 -2.94 L-8.22 -3.15 L-8.13 -3.37 L-8.04 -3.58 L-7.96 -3.80 L-7.88 -4.02 L-7.84 -4.25 L-7.85 -4.53 L-8.01 -4.91 L-8.35 -5.42 L-8.77 -6.03 L-9.07 -6.59 L-9.15 -7.02 L-9.08 -7.35 L-8.94 -7.63 L-8.76 -7.88 L-8.56 -8.12 L-8.34 -8.34 L-8.12 -8.56 L-7.88 -8.76 L-7.63 -8.94 L-7.35 -9.08 L-7.02 -9.15 L-6.59 -9.07 L-6.03 -8.77 L-5.42 -8.35 L-4.91 -8.01 L-4.53 -7.85 L-4.25 -7.84 L-4.02 -7.88 L-3.80 -7.96 L-3.58 -8.04 L-3.37 -8.13 L-3.15 -8.22 L-2.94 -8.31 L-2.73 -8.41 L-2.53 -8.55 L-2.35 -8.76 L-2.19 -9.13 L-2.07 -9.74 L-1.94 -10.47 L-1.75 -11.07 L-1.51 -11.43 L-1.22 -11.62 L-0.92 -11.72 L-0.62 -11.77 L-0.31 -11.79 Z" fill="none" stroke="#999" stroke-width="1.3" stroke-linejoin="round"/><circle cx="0" cy="0" r="4.6" fill="none" stroke="#999" stroke-width="1.3"/></svg>
<div style="position:absolute;left:329px;top:719px;width:13px;height:13px;box-sizing:border-box;border:1px solid #767676;border-radius:2.5px;background:#fff"></div>
<svg style="position:absolute;left:1038px;top:715px" width="30" height="30" viewBox="0 0 30 30"><circle cx="15" cy="15" r="14.3" fill="#8dc96b"/><circle cx="15" cy="15" r="11.6" fill="none" stroke="#fff" stroke-width="1.1"/><path d="M8.4 12.6 L13.6 16.2 L21.2 8.4 L22 10.6 L13.8 20.8 L8 15.4 Z" fill="#fff" stroke="#fff" stroke-width="0.4" stroke-linejoin="round"/></svg>
<svg style="position:absolute;left:1124px;top:714px" width="26" height="26" viewBox="-13 -13 26 26"><path d="M0.00 -11.80 L0.31 -11.79 L0.62 -11.77 L0.92 -11.72 L1.22 -11.62 L1.51 -11.43 L1.75 -11.07 L1.94 -10.47 L2.07 -9.74 L2.19 -9.13 L2.35 -8.76 L2.53 -8.55 L2.73 -8.41 L2.94 -8.31 L3.15 -8.22 L3.37 -8.13 L3.58 -8.04 L3.80 -7.96 L4.02 -7.88 L4.25 -7.84 L4.53 -7.85 L4.91 -8.01 L5.42 -8.35 L6.03 -8.77 L6.59 -9.07 L7.02 -9.15 L7.35 -9.08 L7.63 -8.94 L7.88 -8.76 L8.12 -8.56 L8.34 -8.34 L8.56 -8.12 L8.76 -7.88 L8.94 -7.63 L9.08 -7.35 L9.15 -7.02 L9.07 -6.59 L8.77 -6.03 L8.35 -5.42 L8.01 -4.91 L7.85 -4.53 L7.84 -4.25 L7.88 -4.02 L7.96 -3.80 L8.04 -3.58 L8.13 -3.37 L8.22 -3.15 L8.31 -2.94 L8.41 -2.73 L8.55 -2.53 L8.76 -2.35 L9.13 -2.19 L9.74 -2.07 L10.47 -1.94 L11.07 -1.75 L11.43 -1.51 L11.62 -1.22 L11.72 -0.92 L11.77 -0.62 L11.79 -0.31 L11.80 -0.00 L11.79 0.31 L11.77 0.62 L11.72 0.92 L11.62 1.22 L11.43 1.51 L11.07 1.75 L10.47 1.94 L9.74 2.07 L9.13 2.19 L8.76 2.35 L8.55 2.53 L8.41 2.73 L8.31 2.94 L8.22 3.15 L8.13 3.37 L8.04 3.58 L7.96 3.80 L7.88 4.02 L7.84 4.25 L7.85 4.53 L8.01 4.91 L8.35 5.42 L8.77 6.03 L9.07 6.59 L9.15 7.02 L9.08 7.35 L8.94 7.63 L8.76 7.88 L8.56 8.12 L8.34 8.34 L8.12 8.56 L7.88 8.76 L7.63 8.94 L7.35 9.08 L7.02 9.15 L6.59 9.07 L6.03 8.77 L5.42 8.35 L4.91 8.01 L4.53 7.85 L4.25 7.84 L4.02 7.88 L3.80 7.96 L3.58 8.04 L3.37 8.13 L3.15 8.22 L2.94 8.31 L2.73 8.41 L2.53 8.55 L2.35 8.76 L2.19 9.13 L2.07 9.74 L1.94 10.47 L1.75 11.07 L1.51 11.43 L1.22 11.62 L0.92 11.72 L0.62 11.77 L0.31 11.79 L0.00 11.80 L-0.31 11.79 L-0.62 11.77 L-0.92 11.72 L-1.22 11.62 L-1.51 11.43 L-1.75 11.07 L-1.94 10.47 L-2.07 9.74 L-2.19 9.13 L-2.35 8.76 L-2.53 8.55 L-2.73 8.41 L-2.94 8.31 L-3.15 8.22 L-3.37 8.13 L-3.58 8.04 L-3.80 7.96 L-4.02 7.88 L-4.25 7.84 L-4.53 7.85 L-4.91 8.01 L-5.42 8.35 L-6.03 8.77 L-6.59 9.07 L-7.02 9.15 L-7.35 9.08 L-7.63 8.94 L-7.88 8.76 L-8.12 8.56 L-8.34 8.34 L-8.56 8.12 L-8.76 7.88 L-8.94 7.63 L-9.08 7.35 L-9.15 7.02 L-9.07 6.59 L-8.77 6.03 L-8.35 5.42 L-8.01 4.91 L-7.85 4.53 L-7.84 4.25 L-7.88 4.02 L-7.96 3.80 L-8.04 3.58 L-8.13 3.37 L-8.22 3.15 L-8.31 2.94 L-8.41 2.73 L-8.55 2.53 L-8.76 2.35 L-9.13 2.19 L-9.74 2.07 L-10.47 1.94 L-11.07 1.75 L-11.43 1.51 L-11.62 1.22 L-11.72 0.92 L-11.77 0.62 L-11.79 0.31 L-11.80 0.00 L-11.79 -0.31 L-11.77 -0.62 L-11.72 -0.92 L-11.62 -1.22 L-11.43 -1.51 L-11.07 -1.75 L-10.47 -1.94 L-9.74 -2.07 L-9.13 -2.19 L-8.76 -2.35 L-8.55 -2.53 L-8.41 -2.73 L-8.31 -2.94 L-8.22 -3.15 L-8.13 -3.37 L-8.04 -3.58 L-7.96 -3.80 L-7.88 -4.02 L-7.84 -4.25 L-7.85 -4.53 L-8.01 -4.91 L-8.35 -5.42 L-8.77 -6.03 L-9.07 -6.59 L-9.15 -7.02 L-9.08 -7.35 L-8.94 -7.63 L-8.76 -7.88 L-8.56 -8.12 L-8.34 -8.34 L-8.12 -8.56 L-7.88 -8.76 L-7.63 -8.94 L-7.35 -9.08 L-7.02 -9.15 L-6.59 -9.07 L-6.03 -8.77 L-5.42 -8.35 L-4.91 -8.01 L-4.53 -7.85 L-4.25 -7.84 L-4.02 -7.88 L-3.80 -7.96 L-3.58 -8.04 L-3.37 -8.13 L-3.15 -8.22 L-2.94 -8.31 L-2.73 -8.41 L-2.53 -8.55 L-2.35 -8.76 L-2.19 -9.13 L-2.07 -9.74 L-1.94 -10.47 L-1.75 -11.07 L-1.51 -11.43 L-1.22 -11.62 L-0.92 -11.72 L-0.62 -11.77 L-0.31 -11.79 Z" fill="none" stroke="#999" stroke-width="1.3" stroke-linejoin="round"/><circle cx="0" cy="0" r="4.6" fill="none" stroke="#999" stroke-width="1.3"/></svg>
<svg style="position:absolute;left:990px;top:44px" width="180" height="26" viewBox="990 44 180 26" fill="none" stroke="#6b6e78" stroke-width="1.8" stroke-linecap="round" stroke-linejoin="round"><circle cx="1002" cy="51.8" r="4.3"/><path d="M995.3 65.3 C996 60.5 998.5 58.8 1002 58.8 C1005.5 58.8 1008 60.5 1008.7 65.3"/><path d="M1040 49 L1031.3 64 L1048.7 64 Z"/><path d="M1040 54.5 L1040 58"/><circle cx="1040" cy="61" r="0.4" fill="#6b6e78"/><path d="M1084.7 52.2 L1084.7 48.2 L1069.9 48.2 L1069.9 64 L1084.7 64 L1084.7 60.3" stroke-linecap="butt" stroke-linejoin="miter"/><path d="M1073.5 53.2 L1080 53.2 M1073.5 57 L1077.5 57" stroke-linecap="butt"/><path d="M1079.6 60.9 L1086.4 54.5"/><circle cx="1116" cy="56" r="2.2"/><path d="M1154 47.8 L1154 55"/><path d="M1149 50.3 A7.8 7.8 0 1 0 1159 50.3"/><path transform="translate(1116 56)" d="M0.00 -6.35 L0.17 -6.35 L0.33 -6.35 L0.50 -6.35 L0.67 -6.35 L0.84 -6.37 L1.02 -6.42 L1.21 -6.51 L1.42 -6.69 L1.68 -6.98 L1.97 -7.34 L2.28 -7.69 L2.58 -7.95 L2.86 -8.08 L3.12 -8.12 L3.36 -8.10 L3.58 -8.05 L3.80 -7.97 L4.01 -7.88 L4.22 -7.78 L4.42 -7.66 L4.62 -7.54 L4.82 -7.42 L5.00 -7.28 L5.18 -7.13 L5.34 -6.96 L5.48 -6.76 L5.57 -6.52 L5.59 -6.21 L5.52 -5.82 L5.37 -5.37 L5.21 -4.94 L5.08 -4.58 L5.04 -4.30 L5.05 -4.09 L5.10 -3.91 L5.17 -3.76 L5.25 -3.61 L5.33 -3.46 L5.42 -3.32 L5.50 -3.18 L5.58 -3.03 L5.66 -2.89 L5.75 -2.74 L5.84 -2.60 L5.94 -2.46 L6.07 -2.33 L6.24 -2.21 L6.51 -2.11 L6.88 -2.04 L7.34 -1.97 L7.80 -1.87 L8.18 -1.74 L8.43 -1.56 L8.59 -1.36 L8.70 -1.14 L8.76 -0.92 L8.80 -0.69 L8.83 -0.46 L8.85 -0.23 L8.85 -0.00 L8.85 0.23 L8.83 0.46 L8.80 0.69 L8.76 0.92 L8.70 1.14 L8.59 1.36 L8.43 1.56 L8.18 1.74 L7.80 1.87 L7.34 1.97 L6.88 2.04 L6.51 2.11 L6.24 2.21 L6.07 2.33 L5.94 2.46 L5.84 2.60 L5.75 2.74 L5.66 2.89 L5.58 3.03 L5.50 3.17 L5.42 3.32 L5.33 3.46 L5.25 3.61 L5.17 3.76 L5.10 3.91 L5.05 4.09 L5.04 4.30 L5.08 4.58 L5.21 4.94 L5.37 5.37 L5.52 5.82 L5.59 6.21 L5.57 6.52 L5.48 6.76 L5.34 6.96 L5.18 7.13 L5.00 7.28 L4.82 7.42 L4.62 7.54 L4.42 7.66 L4.22 7.78 L4.01 7.88 L3.80 7.97 L3.58 8.05 L3.36 8.10 L3.12 8.12 L2.86 8.08 L2.58 7.95 L2.28 7.69 L1.97 7.34 L1.68 6.98 L1.42 6.69 L1.21 6.51 L1.02 6.42 L0.84 6.37 L0.67 6.35 L0.50 6.35 L0.33 6.35 L0.17 6.35 L0.00 6.35 L-0.17 6.35 L-0.33 6.35 L-0.50 6.35 L-0.67 6.35 L-0.84 6.37 L-1.02 6.42 L-1.21 6.51 L-1.42 6.69 L-1.68 6.98 L-1.97 7.34 L-2.28 7.69 L-2.58 7.95 L-2.86 8.08 L-3.12 8.12 L-3.36 8.10 L-3.58 8.05 L-3.80 7.97 L-4.01 7.88 L-4.22 7.78 L-4.42 7.66 L-4.62 7.54 L-4.82 7.42 L-5.00 7.28 L-5.18 7.13 L-5.34 6.96 L-5.48 6.76 L-5.57 6.52 L-5.59 6.21 L-5.52 5.82 L-5.37 5.37 L-5.21 4.94 L-5.08 4.58 L-5.04 4.30 L-5.05 4.09 L-5.10 3.91 L-5.17 3.76 L-5.25 3.61 L-5.33 3.46 L-5.42 3.32 L-5.50 3.18 L-5.58 3.03 L-5.66 2.89 L-5.75 2.74 L-5.84 2.60 L-5.94 2.46 L-6.07 2.33 L-6.24 2.21 L-6.51 2.11 L-6.88 2.04 L-7.34 1.97 L-7.80 1.87 L-8.18 1.74 L-8.43 1.56 L-8.59 1.36 L-8.70 1.14 L-8.76 0.92 L-8.80 0.69 L-8.83 0.46 L-8.85 0.23 L-8.85 0.00 L-8.85 -0.23 L-8.83 -0.46 L-8.80 -0.69 L-8.76 -0.92 L-8.70 -1.14 L-8.59 -1.36 L-8.43 -1.56 L-8.18 -1.74 L-7.80 -1.87 L-7.34 -1.97 L-6.88 -2.04 L-6.51 -2.11 L-6.24 -2.21 L-6.07 -2.33 L-5.94 -2.46 L-5.84 -2.60 L-5.75 -2.74 L-5.66 -2.89 L-5.58 -3.03 L-5.50 -3.18 L-5.42 -3.32 L-5.33 -3.46 L-5.25 -3.61 L-5.17 -3.76 L-5.10 -3.91 L-5.05 -4.09 L-5.04 -4.30 L-5.08 -4.58 L-5.21 -4.94 L-5.37 -5.37 L-5.52 -5.82 L-5.59 -6.21 L-5.57 -6.52 L-5.48 -6.76 L-5.34 -6.96 L-5.18 -7.13 L-5.00 -7.28 L-4.82 -7.42 L-4.62 -7.54 L-4.42 -7.66 L-4.22 -7.78 L-4.01 -7.88 L-3.80 -7.97 L-3.58 -8.05 L-3.36 -8.10 L-3.12 -8.12 L-2.86 -8.08 L-2.58 -7.95 L-2.28 -7.69 L-1.97 -7.34 L-1.68 -6.98 L-1.42 -6.69 L-1.21 -6.51 L-1.02 -6.42 L-0.84 -6.37 L-0.67 -6.35 L-0.50 -6.35 L-0.33 -6.35 L-0.17 -6.35 Z"/></svg>
<svg style="position:absolute;left:0;top:0" width="60" height="722" viewBox="0 0 60 722" fill="none" stroke="#2d3446" stroke-width="1.7"><g stroke-width="1.6"><rect x="28.8" y="183.4" width="4.4" height="6.2" rx="0.3"/><rect x="37" y="183.4" width="4.3" height="2.5" rx="0.3"/><rect x="28.8" y="193.4" width="4.4" height="3" rx="0.3"/><rect x="37" y="189.8" width="4.3" height="6.6" rx="0.3"/></g><rect x="27.9" y="225.6" width="14.3" height="12.5" rx="1"/><path d="M31.3 236.2 V233 M35.3 236.2 V228 M38.4 236.2 V230.2" stroke-width="1.8"/><circle cx="34" cy="311" r="4.3"/><path d="M28.3 323.3 C28.8 320.2 30.5 318.3 33.5 317.7" stroke-linecap="round"/><rect x="36.2" y="319.7" width="6.6" height="4.2" fill="#2d3446" stroke="none"/><path d="M37.6 320 V318.2 A1.9 1.9 0 0 1 41.4 318.2 V320" stroke-width="1.4"/><circle cx="35" cy="352.3" r="2.6" stroke-width="1.5"/><circle cx="29.7" cy="355.8" r="1.7" stroke-width="1.4"/><circle cx="40.3" cy="355.8" r="1.7" stroke-width="1.4"/><path d="M31.5 364.7 V361.5 A3.5 3.5 0 0 1 38.5 361.5 V364.7" stroke-width="1.5" stroke-linecap="round"/><path d="M27.3 364.7 V361 A2.3 2.3 0 0 1 29.3 358.8 M42.7 364.7 V361 A2.3 2.3 0 0 0 40.7 358.8" stroke-width="1.5" stroke-linecap="round"/><circle cx="35" cy="395" r="4.2"/><path d="M28.7 407.6 A6.3 5.3 0 0 1 41.3 407.6 Z"/><path d="M35 402.5 V407.5" stroke-width="1.3"/><rect x="29" y="433.8" width="12.2" height="14.5"/><path d="M26.5 448.8 H43.7"/><path d="M32.2 437.5 h1.6 M36.3 437.5 h1.6 M32.2 440.8 h1.6 M36.3 440.8 h1.6 M32.2 444.1 h1.6 M36.3 444.1 h1.6" stroke-width="1.6"/><rect x="28.5" y="527.5" width="4.8" height="4.8"/><rect x="36.5" y="527.5" width="4.8" height="4.8"/><rect x="28.5" y="535.5" width="4.8" height="4.8"/><rect x="36.5" y="535.5" width="4.8" height="4.8"/><rect x="28.7" y="661.8" width="13" height="14.2"/><path d="M32.5 666 H38 M32.5 669 H38 M32.5 672 H38" stroke-width="1.5"/><circle cx="32.3" cy="707.3" r="4.2"/><path d="M38.6 704 A6 6 0 0 1 38.6 710.6 M41.5 702 A9 9 0 0 1 41.5 712.6" stroke-width="1.6" stroke-linecap="round"/></svg>
<svg style="position:absolute;left:0;top:560px" width="60" height="50" viewBox="0 560 60 50" fill="none" stroke="#fff" stroke-width="1.7"><rect x="27.8" y="577.8" width="14.4" height="16.6"/><path d="M28 581.8 H42 M31 591 H39" stroke-width="1.5"/><rect x="30.6" y="584.6" width="3.4" height="3" fill="#fff" stroke="none"/><path d="M35.5 586.1 H39.2" stroke-width="1.5"/></svg>
<svg style="position:absolute;left:229.2px;top:312.8px" width="9.5" height="5.9" viewBox="-1 -1 9.5 5.9"><path d="M0.6 0.6 L3.75 3.3 L6.9 0.6" fill="none" stroke="#3a4150" stroke-width="1.5" stroke-linecap="round" stroke-linejoin="round"/></svg>
<svg style="position:absolute;left:229.5px;top:396.8px" width="9.3" height="5.9" viewBox="-1 -1 9.3 5.9"><path d="M0.6 0.6 L3.65 3.3 L6.7 0.6" fill="none" stroke="#3a4150" stroke-width="1.5" stroke-linecap="round" stroke-linejoin="round"/></svg>
<svg style="position:absolute;left:229.2px;top:667px" width="9.5" height="5.9" viewBox="-1 -1 9.5 5.9"><path d="M0.6 0.6 L3.75 3.3 L6.9 0.6" fill="none" stroke="#3a4150" stroke-width="1.5" stroke-linecap="round" stroke-linejoin="round"/></svg>
<div style="position:absolute;left:1221px;top:44px;width:4px;height:108px;background:linear-gradient(180deg,#f0f0f0 0%,#c4c4c4 30%,#ababab 60%,#a9a9a9 100%)"></div>
<div style="position:absolute;z-index:5;left:0;top:712px;width:260px;height:10px;background:#fff"></div>
<span class="t" id="t0" style="left:74.28px;top:33.95px;font-size:22.5px;font-weight:700;color:#111;-webkit-text-stroke:1px #111">X</span>
<span class="t" id="t1" style="left:92.28px;top:33.95px;font-size:22.5px;font-weight:700;color:#e02727;transform-origin:0 0;transform:scaleX(1.0817);-webkit-text-stroke:1px #e02727">SECURITY</span>
<span class="t" id="t2" style="left:46.70px;top:94.35px;font-size:14px;font-weight:400;color:#777;transform-origin:0 0;transform:scaleX(1.1030)">Search</span>
<span class="t" id="t3" style="left:14.80px;top:141.15px;font-size:14px;font-weight:700;color:#3d3d3d;transform-origin:0 0;transform:scaleX(0.9718)">HOME</span>
<span class="t" id="t4" style="left:56.55px;top:182.30px;font-size:15px;font-weight:400;color:#373e4d;transform-origin:0 0;transform:scaleX(1.0663)">Dashboard</span>
<span class="t" id="t5" style="left:56.55px;top:224.30px;font-size:15px;font-weight:400;color:#373e4d;transform-origin:0 0;transform:scaleX(1.0341)">Server Monitoring</span>
<span class="t" id="t6" style="left:14.80px;top:266.25px;font-size:14px;font-weight:700;color:#3d3d3d;transform-origin:0 0;transform:scaleX(0.9191)">MEMBERS</span>
<span class="t" id="t7" style="left:57.25px;top:307.00px;font-size:15px;font-weight:400;color:#373e4d;transform-origin:0 0;transform:scaleX(1.0569)">Admin</span>
<span class="t" id="t8" style="left:56.75px;top:349.30px;font-size:15px;font-weight:400;color:#373e4d;transform-origin:0 0;transform:scaleX(0.9619)">User</span>
<span class="t" id="t9" style="left:56.75px;top:391.30px;font-size:15px;font-weight:400;color:#373e4d;transform-origin:0 0;transform:scaleX(1.0343)">Security Guards</span>
<span class="t" id="t10" style="left:56.75px;top:433.30px;font-size:15px;font-weight:400;color:#373e4d;transform-origin:0 0;transform:scaleX(1.0868)">Company</span>
<span class="t" id="t11" style="left:14.80px;top:474.85px;font-size:14px;font-weight:700;color:#3d3d3d;transform-origin:0 0;transform:scaleX(0.9224)">SERVICES</span>
<span class="t" id="t12" style="left:56.25px;top:514.80px;font-size:15px;font-weight:400;color:#373e4d;transform-origin:0 0;transform:scaleX(1.0418)">Manage Service</span>
<span class="t" id="t13" style="left:56.25px;top:536.30px;font-size:15px;font-weight:400;color:#373e4d;transform-origin:0 0;transform:scaleX(1.0671)">Category</span>
<span class="t" id="t14" style="left:56.25px;top:578.10px;font-size:15px;font-weight:700;color:#fff;transform-origin:0 0;transform:scaleX(0.9696)">Service Type</span>
<span class="t" id="t15" style="left:14.80px;top:619.75px;font-size:14px;font-weight:700;color:#3d3d3d;transform-origin:0 0;transform:scaleX(0.9431)">BOOKINGS &amp; REPORTS</span>
<span class="t" id="t16" style="left:56.75px;top:661.00px;font-size:15px;font-weight:400;color:#373e4d;transform-origin:0 0;transform:scaleX(1.0276)">Bookings</span>
<span class="t" id="t17" style="left:56.75px;top:703.00px;font-size:15px;font-weight:400;color:#373e4d;transform-origin:0 0;transform:scaleX(0.9859)">Reviews</span>
<span class="t" id="t18" style="left:372.60px;top:35.56px;font-size:18px;font-weight:700;color:#111;transform-origin:0 0;transform:scaleX(1.0797)">Admin Demo</span>
<span class="t" id="t19" style="left:372.80px;top:61.05px;font-size:14px;font-weight:400;color:#7a7d88;transform-origin:0 0;transform:scaleX(1.1358)">Super Administrator</span>
<span class="t" id="t20" style="left:313.65px;top:149.87px;font-size:35px;font-weight:400;color:#333;transform-origin:0 0;transform:scaleX(1.1028);-webkit-text-stroke:0.35px #333">Service Type</span>
<span class="t" id="t21" style="left:313.70px;top:231.95px;font-size:14px;font-weight:700;color:#333;transform-origin:0 0;transform:scaleX(1.0709)">Search:</span>
<span class="t" id="t22" style="left:487.75px;top:231.60px;font-size:15px;font-weight:400;color:#555;transform-origin:0 0;transform:scaleX(1.0443)">Select Subcategory</span>
<span class="t" id="t23" style="left:769.60px;top:232.15px;font-size:14px;font-weight:400;color:#333;transform-origin:0 0;transform:scaleX(0.9458)">SEARCH</span>
<span class="t" id="t24" style="left:872.60px;top:231.95px;font-size:14px;font-weight:400;color:#333;transform-origin:0 0;transform:scaleX(0.8376)">RESET</span>
<span class="t" id="t25" style="left:1040.00px;top:231.95px;font-size:14px;font-weight:700;color:#fff;transform-origin:0 0;transform:scaleX(0.9248)">ADD SERVICE TYPE</span>
<span class="t" id="t26" style="left:321.65px;top:295.00px;font-size:15px;font-weight:400;color:#555;transform-origin:0 0;transform:scaleX(1.0464)">Select Action</span>
<span class="t" id="t27" style="left:368.32px;top:360.07px;font-size:13.5px;font-weight:700;color:#444;transform-origin:0 0;transform:scaleX(1.0436)">Type</span>
<span class="t" id="t28" style="left:538.93px;top:360.37px;font-size:13.5px;font-weight:700;color:#444;transform-origin:0 0;transform:scaleX(1.0522)">Subcategory</span>
<span class="t" id="t29" style="left:800.83px;top:342.27px;font-size:13.5px;font-weight:700;color:#444;transform-origin:0 0;transform:scaleX(1.0419)">Display</span>
<span class="t" id="t30" style="left:801.33px;top:360.37px;font-size:13.5px;font-weight:700;color:#444;transform-origin:0 0;transform:scaleX(1.0290)">Order</span>
<span class="t" id="t31" style="left:883.43px;top:360.37px;font-size:13.5px;font-weight:700;color:#444;transform-origin:0 0;transform:scaleX(1.0245)">Localization</span>
<span class="t" id="t32" style="left:1025.83px;top:360.37px;font-size:13.5px;font-weight:700;color:#444;transform-origin:0 0;transform:scaleX(1.0382)">Status</span>
<span class="t" id="t33" style="left:1114.62px;top:360.37px;font-size:13.5px;font-weight:700;color:#444;transform-origin:0 0;transform:scaleX(1.0464)">Action</span>
<span class="t" id="t34" style="left:367.93px;top:396.87px;font-size:13.5px;font-weight:400;color:#444;transform-origin:0 0;transform:scaleX(1.0728)">Bodyguard for Personal</span>
<span class="t" id="t35" style="left:367.93px;top:414.87px;font-size:13.5px;font-weight:400;color:#444;transform-origin:0 0;transform:scaleX(1.0886)">Protection</span>
<span class="t" id="t36" style="left:538.53px;top:396.87px;font-size:13.5px;font-weight:400;color:#444;transform-origin:0 0;transform:scaleX(1.0479)">Personal Security Services</span>
<span class="t" id="t37" style="left:826px;transform:translateX(-50%);top:396.87px;font-size:13.5px;font-weight:400;color:#444">1</span>
<span class="t" id="t38" style="left:883.12px;top:396.87px;font-size:13.5px;font-weight:400;color:#444;transform-origin:0 0;transform:scaleX(1.0523)">All Locations</span>
<span class="t" id="t39" style="left:367.93px;top:450.87px;font-size:13.5px;font-weight:400;color:#444;transform-origin:0 0;transform:scaleX(1.0595)">Travel Security</span>
<span class="t" id="t40" style="left:367.93px;top:468.87px;font-size:13.5px;font-weight:400;color:#444;transform-origin:0 0;transform:scaleX(1.0796)">Assistance</span>
<span class="t" id="t41" style="left:538.53px;top:450.87px;font-size:13.5px;font-weight:400;color:#444;transform-origin:0 0;transform:scaleX(1.0479)">Personal Security Services</span>
<span class="t" id="t42" style="left:826px;transform:translateX(-50%);top:450.87px;font-size:13.5px;font-weight:400;color:#444">2</span>
<span class="t" id="t43" style="left:883.12px;top:450.87px;font-size:13.5px;font-weight:400;color:#444;transform-origin:0 0;transform:scaleX(1.0523)">All Locations</span>
<span class="t" id="t44" style="left:367.93px;top:504.87px;font-size:13.5px;font-weight:400;color:#444;transform-origin:0 0;transform:scaleX(1.0746)">Home Safety</span>
<span class="t" id="t45" style="left:367.93px;top:522.87px;font-size:13.5px;font-weight:400;color:#444;transform-origin:0 0;transform:scaleX(1.0796)">Assistance</span>
<span class="t" id="t46" style="left:538.53px;top:504.87px;font-size:13.5px;font-weight:400;color:#444;transform-origin:0 0;transform:scaleX(1.0479)">Personal Security Services</span>
<span class="t" id="t47" style="left:826px;transform:translateX(-50%);top:504.87px;font-size:13.5px;font-weight:400;color:#444">3</span>
<span class="t" id="t48" style="left:883.12px;top:504.87px;font-size:13.5px;font-weight:400;color:#444;transform-origin:0 0;transform:scaleX(1.0523)">All Locations</span>
<span class="t" id="t49" style="left:367.93px;top:558.87px;font-size:13.5px;font-weight:400;color:#444;transform-origin:0 0;transform:scaleX(1.0571)">Night Shift Security</span>
<span class="t" id="t50" style="left:367.93px;top:576.87px;font-size:13.5px;font-weight:400;color:#444;transform-origin:0 0;transform:scaleX(1.0886)">Protection</span>
<span class="t" id="t51" style="left:538.53px;top:558.87px;font-size:13.5px;font-weight:400;color:#444;transform-origin:0 0;transform:scaleX(1.0479)">Personal Security Services</span>
<span class="t" id="t52" style="left:826px;transform:translateX(-50%);top:558.87px;font-size:13.5px;font-weight:400;color:#444">4</span>
<span class="t" id="t53" style="left:883.12px;top:558.87px;font-size:13.5px;font-weight:400;color:#444;transform-origin:0 0;transform:scaleX(1.0523)">All Locations</span>
<span class="t" id="t54" style="left:367.93px;top:612.87px;font-size:13.5px;font-weight:400;color:#444;transform-origin:0 0;transform:scaleX(1.0400)">Event Personal Security</span>
<span class="t" id="t55" style="left:538.53px;top:612.87px;font-size:13.5px;font-weight:400;color:#444;transform-origin:0 0;transform:scaleX(1.0479)">Personal Security Services</span>
<span class="t" id="t56" style="left:826px;transform:translateX(-50%);top:612.87px;font-size:13.5px;font-weight:400;color:#444">5</span>
<span class="t" id="t57" style="left:883.12px;top:612.87px;font-size:13.5px;font-weight:400;color:#444;transform-origin:0 0;transform:scaleX(1.0523)">All Locations</span>
<span class="t" id="t58" style="left:367.93px;top:664.87px;font-size:13.5px;font-weight:400;color:#444;transform-origin:0 0;transform:scaleX(1.0635)">High-Risk Protection</span>
<span class="t" id="t59" style="left:538.53px;top:664.87px;font-size:13.5px;font-weight:400;color:#444;transform-origin:0 0;transform:scaleX(1.0479)">Personal Security Services</span>
<span class="t" id="t60" style="left:826px;transform:translateX(-50%);top:664.87px;font-size:13.5px;font-weight:400;color:#444">6</span>
<span class="t" id="t61" style="left:883.12px;top:664.87px;font-size:13.5px;font-weight:400;color:#444;transform-origin:0 0;transform:scaleX(1.0523)">All Locations</span>
<span class="t" id="t62" style="left:367.93px;top:716.87px;font-size:13.5px;font-weight:400;color:#444;transform-origin:0 0;transform:scaleX(1.0774)">Discreet Protection</span>
<span class="t" id="t63" style="left:538.53px;top:716.87px;font-size:13.5px;font-weight:400;color:#444;transform-origin:0 0;transform:scaleX(1.0479)">Personal Security Services</span>
<span class="t" id="t64" style="left:826px;transform:translateX(-50%);top:716.87px;font-size:13.5px;font-weight:400;color:#444">7</span>
<span class="t" id="t65" style="left:883.12px;top:716.87px;font-size:13.5px;font-weight:400;color:#444;transform-origin:0 0;transform:scaleX(1.0523)">All Locations</span>
</body></html>
